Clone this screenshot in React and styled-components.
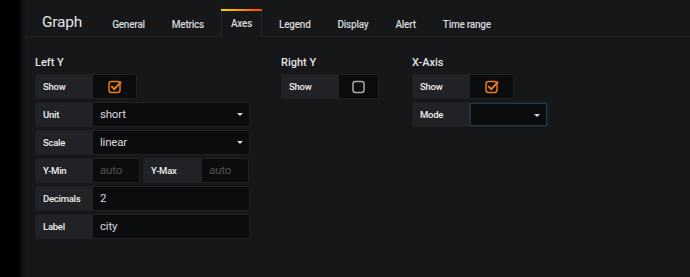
import React from 'react'
import styled, { createGlobalStyle } from 'styled-components'

const GlobalStyle = createGlobalStyle`
  html, body {
    margin: 0;
    padding: 0;
    background: #000;
    font-family: Roboto, "Noto Sans", sans-serif;
  }
`

const Page = styled.div`
  display: flex;
  width: 690px;
  height: 277px;
  overflow: hidden;
`

const Gutter = styled.div`
  width: 25px;
  flex-shrink: 0;
  background: linear-gradient(to right, #000 0px, #000 18px, #0e0f10 22px, #141517 25px);
`

const Panel = styled.div`
  flex: 1;
  background: #161719;
  display: flex;
  flex-direction: column;
`

const Header = styled.div`
  height: 36px;
  display: flex;
  align-items: flex-end;
  border-bottom: 1px solid #242527;
  padding-left: 17px;
`

const Title = styled.div`
  font-size: 15.5px;
  letter-spacing: -0.2px;
  color: #e3e3e4;
  height: 36px;
  line-height: 44px;
  margin-right: 20px;
`

const Tab = styled.div`
  height: 25px;
  line-height: 25px;
  padding: 0 10px;
  margin-right: 7px;
  font-size: 10px;
  letter-spacing: -0.25px;
  font-weight: 500;
  color: #d8d9da;
  position: relative;
  margin-bottom: -1px;
  ${p => p.$active && `
    padding: 0 9px;
    background: #161719;
    border: 1px solid #2a2b2e;
    border-top: 2px solid transparent;
    border-bottom-color: #161719;
    &::before {
      content: '';
      position: absolute;
      left: -1px;
      right: -1px;
      top: -2px;
      height: 2px;
      background: linear-gradient(to right, #ffd500, #ff4400);
    }
  `}
`

const Body = styled.div`
  display: flex;
  padding: 19px 0 0 10px;
`

const Section = styled.div`
  width: ${p => p.$w}px;
  flex-shrink: 0;
  display: flex;
  flex-direction: column;
  gap: 3px;
`

const SectionTitle = styled.div`
  font-size: 11px;
  font-weight: 500;
  color: #e3e3e4;
  height: 14px;
  line-height: 14px;
  margin-bottom: 1px;
`

const Row = styled.div`
  display: flex;
  gap: 3px;
`

const Group = styled.div`
  display: flex;
  height: 25px;
  border: 1px solid #1f2023;
  border-radius: 2px;
  overflow: hidden;
  box-sizing: border-box;
`

const Label = styled.div`
  width: ${p => p.$w || 57}px;
  flex-shrink: 0;
  background: #212226;
  color: #eeeeef;
  font-size: 9.5px;
  letter-spacing: -0.25px;
  font-weight: 500;
  line-height: 23px;
  padding-left: 7px;
  box-sizing: border-box;
`

const Field = styled.div`
  width: ${p => p.$w}px;
  background: #0b0c0e;
  color: ${p => (p.$placeholder ? '#505255' : '#d8d9da')};
  font-size: 11.5px;
  letter-spacing: -0.2px;
  line-height: 23px;
  padding-left: 7px;
  box-sizing: border-box;
  position: relative;
  ${p => p.$focus && `
    border: 1px solid #23394c;
    box-shadow: 0 0 3px rgba(40, 80, 120, 0.4);
  `}
`

const Caret = styled.span`
  position: absolute;
  right: 6px;
  top: 10px;
  width: 0;
  height: 0;
  border-left: 3px solid transparent;
  border-right: 3px solid transparent;
  border-top: 3px solid #d8d9da;
`

const CheckCell = styled.div`
  width: ${p => p.$w || 43}px;
  background: #0b0c0e;
  display: flex;
  align-items: center;
  justify-content: center;
`

const Check = ({ on }) => (
  <svg width="14" height="14" viewBox="0 0 14 14">
    <rect
      x="1"
      y="1.5"
      width="11"
      height="11"
      rx="2.5"
      fill="none"
      stroke={on ? '#eb7b18' : '#a7a9ad'}
      strokeWidth="1.5"
    />
    {on && (
      <path
        d="M3.8 6.6 L6.4 9.2 L12.6 2.4"
        fill="none"
        stroke="#eb7b18"
        strokeWidth="2"
        strokeLinecap="round"
        strokeLinejoin="round"
      />
    )}
  </svg>
)

const tabs = ['General', 'Metrics', 'Axes', 'Legend', 'Display', 'Alert', 'Time range']

const App = () => (
  <>
    <GlobalStyle />
    <Page>
      <Gutter />
      <Panel>
        <Header>
          <Title>Graph</Title>
          {tabs.map(t => (
            <Tab key={t} $active={t === 'Axes'}>
              {t}
            </Tab>
          ))}
        </Header>
        <Body>
          <Section $w={246}>
            <SectionTitle>Left Y</SectionTitle>
            <Row>
              <Group>
                <Label>Show</Label>
                <CheckCell><Check on /></CheckCell>
              </Group>
            </Row>
            <Row>
              <Group>
                <Label>Unit</Label>
                <Field $w={156}>short<Caret /></Field>
              </Group>
            </Row>
            <Row>
              <Group>
                <Label>Scale</Label>
                <Field $w={156}>linear<Caret /></Field>
              </Group>
            </Row>
            <Row>
              <Group>
                <Label>Y-Min</Label>
                <Field $w={46} $placeholder>auto</Field>
              </Group>
              <Group>
                <Label $w={58}>Y-Max</Label>
                <Field $w={46} $placeholder>auto</Field>
              </Group>
            </Row>
            <Row>
              <Group>
                <Label>Decimals</Label>
                <Field $w={156}>2</Field>
              </Group>
            </Row>
            <Row>
              <Group>
                <Label>Label</Label>
                <Field $w={156}>city</Field>
              </Group>
            </Row>
          </Section>
          <Section $w={131}>
            <SectionTitle>Right Y</SectionTitle>
            <Row>
              <Group>
                <Label>Show</Label>
                <CheckCell $w={39}><Check /></CheckCell>
              </Group>
            </Row>
          </Section>
          <Section $w={140}>
            <SectionTitle>X-Axis</SectionTitle>
            <Row>
              <Group>
                <Label>Show</Label>
                <CheckCell><Check on /></CheckCell>
              </Group>
            </Row>
            <Row>
              <Group>
                <Label>Mode</Label>
                <Field $w={77} $focus><Caret /></Field>
              </Group>
            </Row>
          </Section>
        </Body>
      </Panel>
    </Page>
  </>
)

export default App
